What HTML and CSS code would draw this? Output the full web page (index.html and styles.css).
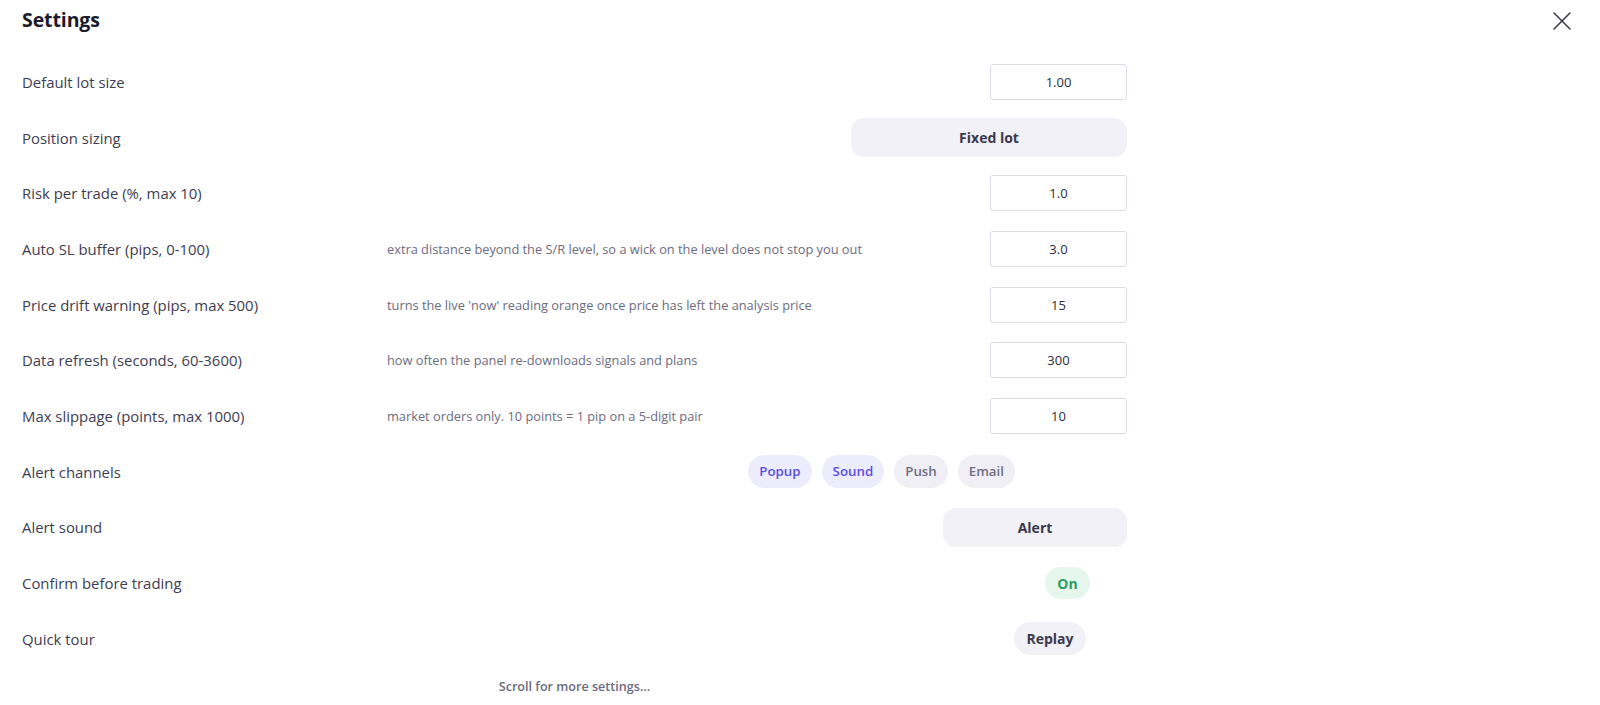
FILE: index.html
```html
<!DOCTYPE html>
<html lang="en">
<head>
<meta charset="utf-8">
<title>Settings</title>
<link rel="stylesheet" href="styles.css">
</head>
<body>
<div class="panel">
  <header class="head">
    <h1 class="title">Settings</h1>
    <button class="close" aria-label="Close">
      <svg width="20" height="20" viewBox="0 0 20 20"><path d="M2 2 L18 18 M18 2 L2 18" stroke="#3b3a50" stroke-width="1.6" stroke-linecap="round" fill="none"/></svg>
    </button>
  </header>
  <div class="list">
    <div class="row">
      <div class="label">Default lot size</div>
      <div class="desc"></div>
      <input class="num" value="1.00">
    </div>
    <div class="row">
      <div class="label">Position sizing</div>
      <div class="desc"></div>
      <button class="pill pill-wide">Fixed lot</button>
    </div>
    <div class="row">
      <div class="label">Risk per trade (%, max 10)</div>
      <div class="desc"></div>
      <input class="num" value="1.0">
    </div>
    <div class="row">
      <div class="label">Auto SL buffer (pips, 0-100)</div>
      <div class="desc">extra distance beyond the S/R level, so a wick on the level does not stop you out</div>
      <input class="num" value="3.0">
    </div>
    <div class="row">
      <div class="label">Price drift warning (pips, max 500)</div>
      <div class="desc">turns the live 'now' reading orange once price has left the analysis price</div>
      <input class="num" value="15">
    </div>
    <div class="row">
      <div class="label">Data refresh (seconds, 60-3600)</div>
      <div class="desc">how often the panel re-downloads signals and plans</div>
      <input class="num" value="300">
    </div>
    <div class="row">
      <div class="label">Max slippage (points, max 1000)</div>
      <div class="desc">market orders only. 10 points = 1 pip on a 5-digit pair</div>
      <input class="num" value="10">
    </div>
    <div class="row">
      <div class="label">Alert channels</div>
      <div class="desc"></div>
      <div class="chips">
        <span class="chip chip-on">Popup</span>
        <span class="chip chip-on">Sound</span>
        <span class="chip">Push</span>
        <span class="chip">Email</span>
      </div>
    </div>
    <div class="row">
      <div class="label">Alert sound</div>
      <div class="desc"></div>
      <button class="pill pill-mid">Alert</button>
    </div>
    <div class="row">
      <div class="label">Confirm before trading</div>
      <div class="desc"></div>
      <button class="toggle">On</button>
    </div>
    <div class="row">
      <div class="label">Quick tour</div>
      <div class="desc"></div>
      <button class="replay">Replay</button>
    </div>
  </div>
  <div class="more">Scroll for more settings...</div>
</div>
</body>
</html>
```
FILE: styles.css
```css
* { box-sizing: border-box; }
html, body { margin: 0; padding: 0; background: #ffffff; }
body {
  font-family: "Open Sans", "Noto Sans", sans-serif;
  color: #3d3c52;
  width: 1600px;
  height: 705px;
  overflow: hidden;
}
.panel {
  padding: 0 28px 0 22px;
}
.head {
  display: flex;
  justify-content: space-between;
  align-items: center;
  height: 40px;
  margin-bottom: 14px;
}
.title {
  margin: 0;
  font-size: 19.5px;
  font-weight: 700;
  color: #1c1b2b;
  line-height: 40px;
  letter-spacing: -0.1px;
}
.close {
  border: 0;
  background: none;
  padding: 0;
  width: 20px;
  height: 20px;
  margin-top: 1px;
  display: flex;
}
.list {
  width: 1105px;
}
.row {
  display: grid;
  grid-template-columns: 365px 1fr auto;
  align-items: center;
  height: 55.7px;
}
.label {
  font-size: 14.9px;
  color: #3e3d53;
  white-space: nowrap;
}
.desc {
  font-size: 12.8px;
  color: #6c6b80;
  white-space: nowrap;
}
.num {
  width: 137px;
  height: 36px;
  border: 1px solid #dcdbe9;
  border-radius: 3px;
  text-align: center;
  font-family: "Open Sans", sans-serif;
  font-size: 13px;
  color: #2c2b3e;
  background: #fff;
  outline: none;
  padding: 0;
}
.pill {
  border: 0;
  height: 39px;
  border-radius: 13px;
  background: #f2f1f8;
  font-family: "Open Sans", sans-serif;
  font-size: 14px;
  font-weight: 700;
  color: #3a394c;
  padding: 0;
}
.pill-wide { width: 276px; }
.pill-mid { width: 184px; }
.chips {
  display: flex;
  gap: 10px;
  margin-right: 112px;
}
.chip {
  height: 33px;
  line-height: 33px;
  padding: 0 11px;
  border-radius: 17px;
  background: #f0eff5;
  color: #6f6e84;
  font-size: 13.3px;
  font-weight: 600;
}
.chip-on {
  background: #edecfd;
  color: #5a4ee3;
}
.toggle {
  border: 0;
  height: 32px;
  width: 45px;
  border-radius: 16px;
  background: #e5f6ed;
  color: #2f9a64;
  font-family: "Open Sans", sans-serif;
  font-size: 14px;
  font-weight: 700;
  padding: 0;
  margin-right: 37px;
}
.replay {
  border: 0;
  height: 33px;
  width: 72px;
  border-radius: 17px;
  background: #f2f1f8;
  color: #3a394c;
  font-family: "Open Sans", sans-serif;
  font-size: 14px;
  font-weight: 700;
  padding: 0;
  margin-right: 41px;
}
.more {
  width: 1105px;
  text-align: center;
  font-size: 12.6px;
  font-weight: 600;
  color: #6c6b80;
  line-height: 20px;
  margin-top: 10px;
}
```
